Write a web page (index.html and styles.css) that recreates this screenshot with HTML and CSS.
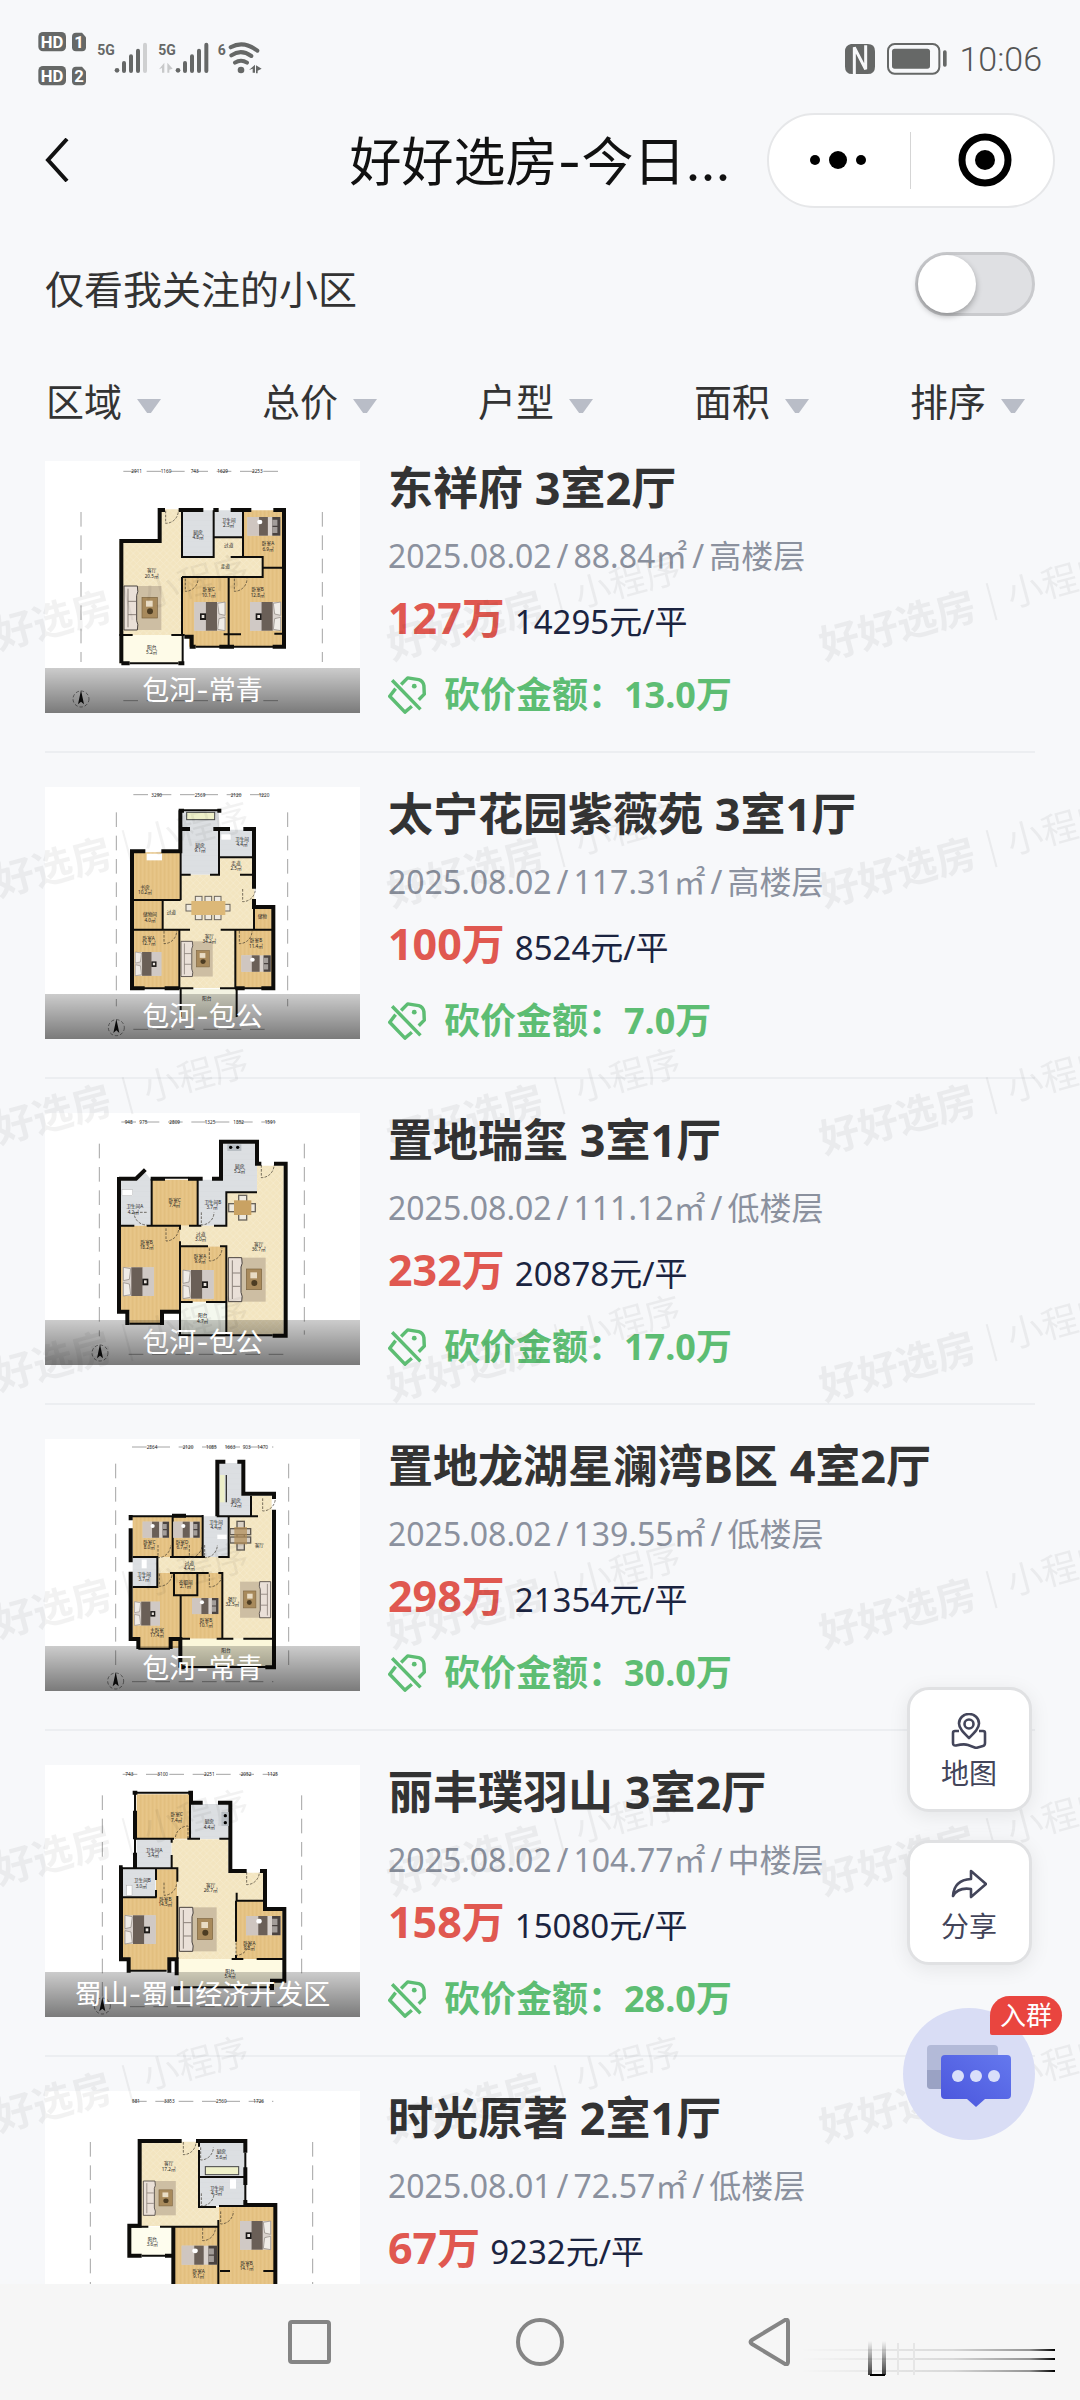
FILE: index.html
```html
<!DOCTYPE html>
<html lang="zh-CN">
<head>
<meta charset="utf-8">
<meta name="viewport" content="width=device-width, initial-scale=1">
<title>好好选房-今日</title>
<link rel="stylesheet" href="styles.css">
</head>
<body>
<svg class="defs" aria-hidden="true">
  <defs>
    <pattern id="wood" width="24" height="60" patternUnits="userSpaceOnUse">
      <rect width="24" height="60" fill="#e5c384"/>
      <path d="M2 0v60M14 0v60" stroke="#e0bc7a" stroke-width="2"/>
      <path d="M8 0v60M20 0v60" stroke="#e9c98d" stroke-width="2"/>
    </pattern>
    <pattern id="tile" width="20" height="20" patternUnits="userSpaceOnUse">
      <rect width="20" height="20" fill="#f3e5c0"/>
      <path d="M0 0L20 20M20 0L0 20" stroke="#f7ecd0" stroke-width="2"/>
    </pattern>
    <pattern id="grey" width="16" height="16" patternUnits="userSpaceOnUse">
      <rect width="16" height="16" fill="#dcdfe2"/>
      <path d="M0 0h16" stroke="#d2d6da" stroke-width="1"/>
    </pattern>
    <g id="bed">
      <rect width="94" height="86" fill="#d9d2cd"/>
      <rect x="34" width="34" height="86" fill="#6a5f57"/>
      <rect y="0" width="34" height="86" fill="#d0c9c5"/>
      <path d="M70 4l22-4v40l-18-4zM70 82l22 4V46l-18 4z" fill="#f0ece7" stroke="#8a827b" stroke-width="2"/>
      <rect x="17" y="34" width="18" height="20" fill="#1c1917"/>
      <rect x="22" y="39" width="8" height="9" fill="#e8e2dc"/>
    </g>
    <g id="bedtop">
      <rect width="90" height="56" fill="#d9d2cd"/>
      <rect x="0" width="32" height="56" fill="#cfc6c0"/>
      <rect x="32" width="24" height="56" fill="#6a5f57"/>
      <rect x="68" width="22" height="56" fill="#4a4340"/>
      <path d="M68 8h14v18H68zM68 30h14v18H68z" fill="#a39d99"/>
      <circle cx="34" cy="15" r="7" fill="#fff"/>
    </g>
    <g id="sofa">
      <rect width="112" height="132" fill="#cdbea3"/>
      <path d="M0 0h40q4 20-2 28v76q6 10 2 28H0z" fill="#eae0d8" stroke="#4b4440" stroke-width="3"/>
      <path d="M12 8v116M12 46h24M12 86h24" stroke="#8b817a" stroke-width="3" fill="none"/>
      <rect x="54" y="34" width="46" height="62" fill="#a88a5c" stroke="#7b6340" stroke-width="2"/>
      <rect x="66" y="44" width="20" height="18" fill="#e9dcc4"/>
      <circle cx="78" cy="76" r="9" fill="#4c3c22"/>
    </g>
    <g id="compass">
      <circle r="24" fill="none" stroke="#555" stroke-width="2" stroke-dasharray="10 6"/>
      <path d="M0-26L9 16 0 8-9 16z" fill="#111"/>
    </g>
    <g id="door">
      <path d="M0 0v38A38 38 0 0 0 38 0" fill="none" stroke="#3a3328" stroke-width="2" stroke-dasharray="8 4"/>
    </g>
    <g id="slash-tag">
      <path d="M38 24L57 5l32 5q13 4 15 18l1 24-16 16M22 36L5 58l44 46 20-17M12 12l82 84" fill="none" stroke="currentColor" stroke-width="10" stroke-linejoin="round"/>
      <circle cx="76" cy="29" r="7" fill="currentColor"/>
    </g>
    <pattern id="mark" width="432" height="247" patternUnits="userSpaceOnUse" patternTransform="translate(382 72)">
      <g transform="translate(10 134) rotate(-15)" fill="#000" fill-opacity=".05">
        <text class="mark-name" x="0" y="0">好好选房</text>
        <rect x="176" y="-32" width="2" height="38"/>
        <text class="mark-kind" x="194" y="-2">小程序</text>
      </g>
    </pattern>
  </defs>
</svg>

<div class="app">
  <div class="status">
    <svg class="status-left" viewBox="0 0 750 240" aria-hidden="true">
      <g fill="#666867">
        <rect x="25" y="36" width="83" height="58" rx="14"/><path d="M126 50q0-12 12-12h18l12 14v30q0 12-12 12h-18q-12 0-12-12z"/>
        <rect x="25" y="138" width="83" height="58" rx="14"/><path d="M126 152q0-12 12-12h18l12 14v30q0 12-12 12h-18q-12 0-12-12z"/>
        <circle cx="261" cy="151" r="7"/><circle cx="444" cy="151" r="7"/><circle cx="633" cy="150" r="10"/>
        <path d="M657 150l18-16v24h-7v-12zM695 146l-17-10v24h5v-8z"/>
      </g>
      <g fill="#fff" class="badge-text"><text x="32" y="83">HD</text><text x="133" y="83">1</text><text x="32" y="185">HD</text><text x="133" y="185">2</text></g>
      <g fill="#666867" class="net-text"><text x="202" y="106">5G</text><text x="385" y="106">5G</text><text x="563" y="104">6</text></g>
      <g stroke="#666867" stroke-width="12" stroke-linecap="round" fill="none">
        <path d="M282 129v24M303 109v44M324 92v61"/>
        <path d="M465 129v24M486 109v44M507 92v61M529 74v79"/>
        <path d="M345 74v79" stroke="#cfd0d1"/>
        <path d="M615 128q18-12 36 0M604 106q29-20 60 2M602 82q38-22 80 10"/>
      </g>
      <path d="M387 148l16-20v30h-7v-14zM428 146l-16-18v30h6v-9z" fill="#c8c9ca"/>
    </svg>
    <div class="status-right">
      <svg class="nfc" viewBox="0 0 90 90" aria-hidden="true">
        <path d="M18 0h50q22 0 22 22v46q0 22-22 22H22Q0 90 0 68V22Q0 4 18 0z" fill="#666867"/>
        <path d="M28 90V10l34 66V4" fill="none" stroke="#f7f8fa" stroke-width="9"/>
      </svg>
      <svg class="battery" viewBox="0 0 180 96" aria-hidden="true">
        <rect x="3" y="3" width="154" height="89" rx="20" fill="none" stroke="#666867" stroke-width="6"/>
        <rect x="15" y="17" width="114" height="60" rx="8" fill="#666867"/>
        <rect x="168" y="22" width="11" height="49" rx="5" fill="#666867"/>
      </svg>
      <span class="clock">10:06</span>
    </div>
  </div>

  <header class="topbar">
    <button class="back" aria-label="返回">
      <svg viewBox="0 0 24 44" aria-hidden="true"><path d="M22 1L3 22l19 21" fill="none" stroke="#111" stroke-width="4"/></svg>
    </button>
    <h1 class="page-title">好好选房-今日...</h1>
    <div class="capsule">
      <button class="capsule-btn" aria-label="更多">
        <svg class="dots" viewBox="0 0 58 20" aria-hidden="true"><circle cx="6" cy="10" r="5"/><circle cx="29" cy="10" r="9"/><circle cx="52" cy="10" r="5"/></svg>
      </button>
      <button class="capsule-btn" aria-label="关闭">
        <svg class="target" viewBox="0 0 54 54" aria-hidden="true"><circle cx="27" cy="27" r="23" fill="none" stroke="#000" stroke-width="7"/><circle cx="27" cy="27" r="10"/></svg>
      </button>
    </div>
  </header>

  <div class="follow">
    <label for="follow">仅看我关注的小区</label>
    <input id="follow" class="switch" type="checkbox" role="switch">
  </div>

  <nav class="filters">
    <button class="filter">区域</button>
    <button class="filter">总价</button>
    <button class="filter">户型</button>
    <button class="filter">面积</button>
    <button class="filter">排序</button>
  </nav>

  <main class="list">
    <article class="item">
      <div class="thumb">
        <svg viewBox="135 63 945 756" aria-hidden="true">
          <path class="dim" d="M370 94H846M243 216V666M967 216V666M370 782H846"/>
          <g class="nums"><text x="410" y="100">2911</text><text x="498" y="100">1160</text><text x="584" y="100">743</text><text x="668" y="100">1629</text><text x="772" y="100">2253</text></g>
          <path fill="url(#tile)" d="M358 303H478V208H546V351H788V411H546V585H358z"/>
          <path fill="url(#tile)" d="M641 292h88v62h-88z"/>
          <path fill="url(#grey)" d="M546 211h95v140h-95zM641 211h88v81h-88z"/>
          <path fill="url(#wood)" d="M729 211H851V620H567V585H546V411H788V351H729z"/>
          <path fill="#fefbe8" d="M358 585H548V672H358z"/>
          <path class="wall" d="M364 670V303H479V210M473 210h22M536 210H610M640 210h16M692 210h62M820 210H852V620H818M364 670h25M535 670h18M553 590h22v30h12M658 620h44"/>
          <path class="thin" d="M546 211V351H641V211M641 292h88M729 211V351M692 351H788V411H546M546 411V585M686 411V620M788 383h66M358 585h40M514 585h40M548 585v85M671 583h52M823 581h30M389 670h146M587 620h240"/>
          <use href="#bed" x="583" y="486"/><use href="#bed" x="750" y="486"/>
          <use href="#bedtop" transform="translate(742 231) scale(1.1 1)"/>
          <use href="#sofa" x="372" y="438"/>
          <use href="#door" x="497" y="212"/><use href="#door" x="556" y="416"/><use href="#door" x="703" y="416"/>
          <g class="room"><text x="455" y="397">客厅</text><text x="455" y="413">20.5㎡</text><text x="594" y="281">厨房</text><text x="594" y="297">4.8㎡</text><text x="686" y="246">卫生间</text><text x="686" y="262">2.5㎡</text><text x="686" y="320">过道</text><text x="804" y="316">卧室A</text><text x="804" y="332">6.9㎡</text><text x="676" y="385">走道</text><text x="626" y="454">卧室C</text><text x="626" y="470">10.1㎡</text><text x="773" y="454">卧室B</text><text x="773" y="470">12.8㎡</text><text x="455" y="626">阳台</text><text x="455" y="642">5.2㎡</text></g>
          <use href="#compass" x="243" y="777"/>
        </svg>
        <span class="area-tag">包河-常青</span>
      </div>
      <div class="info">
        <h2>东祥府 3室2厅</h2>
        <p class="meta"><span>2025.08.02</span><span>/</span><span>88.84㎡</span><span>/</span><span>高楼层</span></p>
        <p class="price"><strong>127万</strong><span>14295元/平</span></p>
        <p class="cut"><svg viewBox="0 0 110 109" aria-hidden="true"><use href="#slash-tag"/></svg>砍价金额：13.0万</p>
      </div>
    </article>

    <article class="item">
      <div class="thumb">
        <svg viewBox="135 52 945 756" aria-hidden="true">
          <path class="dim" d="M400 75H815M349 128V710M863 128V710M400 779H815"/>
          <g class="nums"><text x="470" y="81">3290</text><text x="600" y="81">2569</text><text x="708" y="81">2120</text><text x="792" y="81">1220</text></g>
          <path fill="url(#wood)" d="M400 248H542V391H488V480H538V657H400zM762 415h55V657H706V480H762z"/>
          <path fill="url(#grey)" d="M545 125H657V315H545zM658 180h103v82H658z"/>
          <path fill="url(#tile)" d="M488 391H540V315H658V262H763V480H706V655H538V480H488z"/>
          <path fill="#f3f3e2" d="M542 657H710V745H542z"/>
          <path class="wall" d="M436 245H396V656h38M494 656h44M434 245h2M484 245H541V122M536 123h16M652 123h12M536 178h34M640 178H690M730 178H762V357M762 388v24H820V656H784M706 656h28"/>
          <path class="thin" d="M542 122H658M542 245V391M400 391H542M488 391V480M400 480H570M538 480V657M545 315H572M630 315H657V178M658 263h100M720 315h42M662 480H820M706 480V657M762 412v68M400 656H580M660 656H820M542 657v85M710 657v85"/>
          <rect x="560" y="128" width="84" height="22" fill="#eef0c9" stroke="#444" stroke-width="3"/>
          <g fill="#eee9df" stroke="#6b655c" stroke-width="3"><rect x="586" y="380" width="20" height="70"/><rect x="615" y="380" width="20" height="70"/><rect x="643" y="380" width="20" height="70"/><rect x="558" y="404" width="132" height="20"/></g>
          <rect x="574" y="394" width="102" height="42" fill="#dcb878"/>
          <use href="#bed" transform="translate(484 547) scale(-.85 .83)"/>
          <use href="#bedtop" transform="translate(724 557) scale(.98 .88)"/>
          <use href="#sofa" transform="translate(543 515) scale(.85 .8)"/>
          <rect x="440" y="252" width="46" height="20" fill="#fff"/><rect x="664" y="194" width="28" height="16" fill="#fff"/>
          <use href="#door" x="492" y="484"/><use href="#door" x="718" y="484"/><use href="#door" x="728" y="358"/>
          <g class="room"><text x="435" y="358">书房</text><text x="435" y="374">10.2㎡</text><text x="600" y="232">厨房</text><text x="600" y="248">9.1㎡</text><text x="726" y="214">卫生间</text><text x="726" y="230">4.4㎡</text><text x="450" y="440">储物间</text><text x="450" y="456">4.0㎡</text><text x="514" y="432">过道</text><text x="708" y="286">走道</text><text x="708" y="302">2.5㎡</text><text x="446" y="510">卧室A</text><text x="446" y="526">12.7㎡</text><text x="628" y="504">客厅</text><text x="628" y="520">34.2㎡</text><text x="768" y="518">卧室B</text><text x="768" y="534">11.4㎡</text><text x="787" y="444">储物</text><text x="620" y="692">阳台</text></g>
          <use href="#compass" x="349" y="774"/>
        </svg>
        <span class="area-tag">包河-包公</span>
      </div>
      <div class="info">
        <h2>太宁花园紫薇苑 3室1厅</h2>
        <p class="meta"><span>2025.08.02</span><span>/</span><span>117.31㎡</span><span>/</span><span>高楼层</span></p>
        <p class="price"><strong>100万</strong><span>8524元/平</span></p>
        <p class="cut"><svg viewBox="0 0 110 109" aria-hidden="true"><use href="#slash-tag"/></svg>砍价金额：7.0万</p>
      </div>
    </article>

    <article class="item">
      <div class="thumb">
        <svg viewBox="135 70 945 756" aria-hidden="true">
          <path class="dim" d="M364 97H854M298 162V740M913 162V735M386 794H852"/>
          <g class="nums"><text x="386" y="103">948</text><text x="430" y="103">975</text><text x="524" y="103">2809</text><text x="630" y="103">1325</text><text x="716" y="103">1852</text><text x="810" y="103">1591</text></g>
          <path fill="url(#grey)" d="M363 272H410L435 248 455 272V408H363zM593 270h85v138h-85zM668 162h103v146H668z"/>
          <path fill="url(#wood)" d="M455 270H593V408H540V470H678V636H540V663H483V700H388V663H363V408H455z"/>
          <path fill="url(#tile)" d="M678 308H771V228H851V735H678V470H540V408H678z"/>
          <path fill="#f4f8ee" d="M540 638H678V736H540z"/>
          <path class="wall" d="M357 267H408L436 240M452 267H495M564 267H608M636 267H663V156H771V222H784M822 222H857V738H818M357 262V666H382V706M486 706V666H541"/>
          <path class="thin" d="M455 267V408M363 408h40M440 408H540V420M540 455V738M593 267V408M642 408h37V308H771M567 408h37M540 470H624M660 470h19V738M540 637H578M618 637H679M495 264h70M388 702h92M535 737H818"/>
          <use href="#bed" transform="translate(462 533) scale(-1 1)"/><use href="#bed" transform="translate(641 541) scale(-1 1)"/>
          <use href="#sofa" x="685" y="504"/>
          <rect x="366" y="300" width="32" height="18" fill="#fff" stroke="#999"/><rect x="682" y="164" width="42" height="20" fill="#b8bec3"/>
          <circle cx="692" cy="173" r="5"/><circle cx="713" cy="173" r="5"/>
          <g fill="#eee9df" stroke="#6b655c" stroke-width="4"><rect x="716" y="317" width="24" height="74"/><rect x="686" y="342" width="80" height="24"/></g><rect x="702" y="332" width="52" height="44" fill="#c9a263"/>
          <use href="#door" x="784" y="226"/><use href="#door" x="498" y="416"/><use href="#door" x="628" y="476"/><use href="#door" transform="translate(440 368) rotate(90)"/><use href="#door" transform="translate(604 368)"/>
          <g class="room"><text x="404" y="356">卫生间A</text><text x="400" y="372">4.2㎡</text><text x="524" y="336">卧室C</text><text x="524" y="352">7.4㎡</text><text x="638" y="343">卫生间B</text><text x="636" y="359">3.7㎡</text><text x="719" y="235">厨房</text><text x="719" y="251">5.2㎡</text><text x="602" y="438">过道</text><text x="602" y="454">3.0㎡</text><text x="440" y="462">卧室B</text><text x="440" y="478">18.2㎡</text><text x="600" y="504">卧室A</text><text x="600" y="520">9.9㎡</text><text x="776" y="468">客厅</text><text x="776" y="484">36.7㎡</text><text x="608" y="683">阳台</text><text x="608" y="699">4.7㎡</text></g>
          <use href="#compass" x="300" y="790"/>
        </svg>
        <span class="area-tag">包河-包公</span>
      </div>
      <div class="info">
        <h2>置地瑞玺 3室1厅</h2>
        <p class="meta"><span>2025.08.02</span><span>/</span><span>111.12㎡</span><span>/</span><span>低楼层</span></p>
        <p class="price"><strong>232万</strong><span>20878元/平</span></p>
        <p class="cut"><svg viewBox="0 0 110 109" aria-hidden="true"><use href="#slash-tag"/></svg>砍价金额：17.0万</p>
      </div>
    </article>

    <article class="item">
      <div class="thumb">
        <svg viewBox="135 58 945 756" aria-hidden="true">
          <path class="dim" d="M396 82H820M347 132V770M866 132V740M396 786H820"/>
          <g class="nums"><text x="456" y="88">2864</text><text x="564" y="88">2120</text><text x="634" y="88">1085</text><text x="690" y="88">1663</text><text x="740" y="88">903</text><text x="788" y="88">1470</text></g>
          <path fill="url(#wood)" d="M398 290H608V412H398zM398 502H472V460H667V657H542V685H415V657H398z"/>
          <path fill="url(#grey)" d="M608 290h78v122h-78zM656 130H725V228H753V290H656zM398 412h74v90h-74z"/>
          <path fill="url(#tile)" d="M753 228H815V657H667V460H472V412H686V290H753z"/>
          <path fill="#fbf7da" d="M542 657H817V742H542z"/>
          <path class="wall" d="M392 302V286M392 326V428M392 456V658H415V688M512 688V658H541V744M516 288H558M652 290V126H676M712 126H730V222H822V238M822 270V743H796M540 743h14"/>
          <path class="thin" d="M392 290H610M518 290V412M608 286V412M650 290H774M753 228V290M686 290V412H655M398 412H475M510 412H615M398 502H472V412M522 460V527H592V460M510 460H626M655 460H667V657M542 527V657M542 657H570M650 657H700M730 657H817M415 687H510M550 742H800"/>
          <path d="M679 166v82" stroke="#333" stroke-width="4"/><rect x="660" y="166" width="14" height="82" fill="#eef0c9"/>
          <use href="#bedtop" transform="translate(428 306) scale(.88 .86)"/><use href="#bedtop" transform="translate(520 306) scale(.88 .86)"/><use href="#bedtop" transform="translate(576 535) scale(.88 .86)"/>
          <use href="#bed" transform="translate(480 546) scale(-.83 .83)"/>
          <use href="#sofa" transform="translate(812 486) scale(-.82 .82)"/>
          <g fill="#d8d0c4" stroke="#5f5951" stroke-width="4"><rect x="711" y="305" width="22" height="86"/><rect x="690" y="327" width="62" height="18"/><rect x="690" y="352" width="62" height="18"/></g><path d="M703 322h38v52h-38z" fill="#b08b56" opacity=".7"/>
          <rect x="652" y="345" width="28" height="13" fill="#fff"/><rect x="425" y="420" width="15" height="26" fill="#fff"/>
          <use href="#door" x="788" y="236"/><use href="#door" x="478" y="462"/><use href="#door" x="628" y="464"/><use href="#door" x="474" y="376"/><use href="#door" x="568" y="376"/><use href="#door" x="614" y="376"/>
          <g class="room"><text x="448" y="374">卧室C</text><text x="448" y="389">8.0㎡</text><text x="546" y="374">卧室D</text><text x="546" y="389">6.7㎡</text><text x="648" y="312">卫生间</text><text x="648" y="328">4.4㎡</text><text x="708" y="248">厨房</text><text x="708" y="262">7.2㎡</text><text x="778" y="383">客厅</text><text x="568" y="436">过道</text><text x="568" y="450">4.4㎡</text><text x="432" y="468">卫生间</text><text x="432" y="483">3.7㎡</text><text x="557" y="492">衣帽间</text><text x="557" y="506">2.1㎡</text><text x="471" y="638">主卧室</text><text x="471" y="653">17.4㎡</text><text x="618" y="608">卧室B</text><text x="618" y="623">10.1㎡</text><text x="697" y="545">餐厅</text><text x="697" y="560">32.5㎡</text><text x="678" y="698">阳台</text></g>
          <use href="#compass" x="347" y="784"/>
        </svg>
        <span class="area-tag">包河-常青</span>
      </div>
      <div class="info">
        <h2>置地龙湖星澜湾B区 4室2厅</h2>
        <p class="meta"><span>2025.08.02</span><span>/</span><span>139.55㎡</span><span>/</span><span>低楼层</span></p>
        <p class="price"><strong>298万</strong><span>21354元/平</span></p>
        <p class="cut"><svg viewBox="0 0 110 109" aria-hidden="true"><use href="#slash-tag"/></svg>砍价金额：30.0万</p>
      </div>
    </article>

    <article class="item">
      <div class="thumb">
        <svg viewBox="135 75 945 756" aria-hidden="true">
          <path class="dim" d="M368 103H848M307 166V770M905 166V720M390 800H848"/>
          <g class="nums"><text x="388" y="109">743</text><text x="488" y="109">3100</text><text x="628" y="109">2251</text><text x="738" y="109">2052</text><text x="818" y="109">1125</text></g>
          <path fill="url(#wood)" d="M410 163H570V296H410zM368 472H468V388H532V660H505V690H390V660H368zM708 482H795V512H848V657H708z"/>
          <path fill="url(#grey)" d="M572 192h113v105H572zM410 298h105v86H410zM368 388h98v84h-98z"/>
          <path fill="url(#tile)" d="M515 298H685V398H790V482H708V657H532V385H515z"/>
          <path fill="#fefae2" d="M535 657H847V742H535z"/>
          <path class="wall" d="M398 158H412M565 158H573V188H608M654 188H691V393H740M780 393H795V507H853V722H816V750M405 212V298M405 338V385M368 382H363V658H386V698M508 698V658H530V706M522 745h18"/>
          <path class="thin" d="M405 158H572M570 160V296M405 160V385M405 296H522M562 296H600M658 296H690M515 298V308M515 345V385M363 385H532V425M468 388V420M468 450V472M363 472H470M532 468V657M710 458V482H795M708 482V605M708 645V657H730M770 657H853M695 657h15M390 692h110M535 742H815"/>
          <use href="#bed" transform="translate(467 526) scale(-1 1)"/><use href="#bedtop" transform="translate(738 528) scale(1.15 1.03)"/>
          <use href="#sofa" x="538" y="502"/>
          <rect x="380" y="436" width="16" height="30" fill="#fff" stroke="#999"/><rect x="664" y="216" width="22" height="42" fill="#b8bec3"/>
          <circle cx="676" cy="227" r="5"/><circle cx="676" cy="248" r="5"/>
          <use href="#door" x="740" y="396"/><use href="#door" x="492" y="428"/><use href="#door" transform="translate(564 296) rotate(180)"/><use href="#door" x="708" y="608"/>
          <g class="room"><text x="530" y="229">卧室C</text><text x="530" y="245">7.4㎡</text><text x="628" y="250">厨房</text><text x="628" y="266">4.4㎡</text><text x="462" y="336">卫生间A</text><text x="460" y="352">3.4㎡</text><text x="427" y="427">卫生间B</text><text x="424" y="443">3.0㎡</text><text x="632" y="440">客厅</text><text x="632" y="456">26.7㎡</text><text x="496" y="482">卧室B</text><text x="496" y="498">14.5㎡</text><text x="748" y="615">卧室A</text><text x="748" y="631">9.8㎡</text><text x="690" y="699">阳台</text><text x="690" y="715">5.4㎡</text></g>
          <use href="#compass" x="307" y="798"/>
        </svg>
        <span class="area-tag">蜀山-蜀山经济开发区</span>
      </div>
      <div class="info">
        <h2>丽丰璞羽山 3室2厅</h2>
        <p class="meta"><span>2025.08.02</span><span>/</span><span>104.77㎡</span><span>/</span><span>中楼层</span></p>
        <p class="price"><strong>158万</strong><span>15080元/平</span></p>
        <p class="cut"><svg viewBox="0 0 110 109" aria-hidden="true"><use href="#slash-tag"/></svg>砍价金额：28.0万</p>
      </div>
    </article>

    <article class="item">
      <div class="thumb">
        <svg viewBox="135 63 945 756" aria-hidden="true">
          <path class="dim" d="M396 94H820M271 216V700M938 216V700"/>
          <g class="nums"><text x="408" y="100">581</text><text x="508" y="100">3353</text><text x="664" y="100">2560</text><text x="776" y="100">1726</text></g>
          <path fill="url(#tile)" d="M422 215H597V411H657V468H422z"/>
          <path fill="url(#grey)" d="M600 215H735V320H600zM600 324H735V408H600z"/>
          <path fill="#fefdee" d="M390 470H519V558H390z"/>
          <path fill="url(#wood)" d="M657 411H826V700H525V470H657z"/>
          <path class="wall" d="M545 213H419V467H388V557H425M588 213H736V248M736 292V345M736 390V405H826V720M495 557h25M520 470V720"/>
          <path class="thin" d="M597 240V270M597 213V230M597 268V411H645V408M657 408H826M597 321H736M736 248V400M445 470H388M480 470H655M655 450V720M660 603H690M790 603H826M425 557h70"/>
          <use href="#bed" x="720" y="453"/><use href="#bedtop" transform="translate(545 527) scale(1.18 1.02)"/>
          <use href="#sofa" transform="translate(430 333) scale(.87 .78)"/>
          <rect x="616" y="290" width="100" height="24" fill="#eef0c9" stroke="#444" stroke-width="3"/><rect x="690" y="328" width="18" height="28" fill="#fff"/>
          <use href="#door" x="550" y="216"/><use href="#door" x="602" y="232"/><use href="#door" x="662" y="424"/><use href="#door" x="608" y="474"/><use href="#door" x="604" y="370"/>
          <g class="room"><text x="506" y="286">客厅</text><text x="506" y="302">17.2㎡</text><text x="664" y="250">厨房</text><text x="664" y="266">5.6㎡</text><text x="650" y="360">卫生间</text><text x="650" y="376">4.3㎡</text><text x="457" y="512">阳台</text><text x="457" y="528">3.6㎡</text><text x="740" y="584">卧室B</text><text x="740" y="600">14.1㎡</text><text x="596" y="610">卧室A</text><text x="596" y="625">9.1㎡</text></g>
        </svg>
      </div>
      <div class="info">
        <h2>时光原著 2室1厅</h2>
        <p class="meta"><span>2025.08.01</span><span>/</span><span>72.57㎡</span><span>/</span><span>低楼层</span></p>
        <p class="price"><strong>67万</strong><span>9232元/平</span></p>
      </div>
    </article>
    <svg class="watermark" aria-hidden="true"><rect width="100%" height="100%" fill="url(#mark)"/></svg>
  </main>

  <aside class="floaters">
    <button class="float-btn">
      <svg viewBox="0 0 36 36" aria-hidden="true"><g fill="none" stroke="#43455a" stroke-width="2.6" stroke-linejoin="round"><path d="M18 25C12 19 8 15 8 10.500a10 9.500 0 0 1 20 0C28 15 24 19 18 25z"/><circle cx="18" cy="11" r="4.500"/><path d="M8 18H4q-2 0-2 2v10q0 3 3 2.500 8-2 12-.5l8 3 7-2q2-.5 2-3V20q0-2-2-2h-4"/></g></svg>
      地图
    </button>
    <button class="float-btn">
      <svg viewBox="0 0 36 36" aria-hidden="true"><path d="M20 5L35 18 20 31V23Q7 21 2 30 3 14 20 13z" fill="none" stroke="#43455a" stroke-width="2.6" stroke-linejoin="round"/></svg>
      分享
    </button>
    <button class="chat" aria-label="入群">
      <svg viewBox="0 0 132 132" aria-hidden="true">
        <defs><linearGradient id="bubble" x1="0" y1="1" x2="1" y2="0"><stop offset="0" stop-color="#4a55dc"/><stop offset="1" stop-color="#6478ee"/></linearGradient></defs>
        <rect x="24" y="37" width="71" height="44" rx="4" fill="#b3bad8"/>
        <path d="M24 62h15v19H28q-4 0-4-4z" fill="#9aa2c4"/>
        <path d="M42 47h62q4 0 4 4v36q0 4-4 4H82l-9 8-9-8H42q-4 0-4-4V51q0-4 4-4z" fill="url(#bubble)"/>
        <g fill="#d9dffa"><circle cx="55" cy="68" r="6"/><circle cx="73" cy="68" r="6"/><circle cx="91" cy="68" r="6"/></g>
      </svg>
      <span class="join">入群</span>
    </button>
  </aside>

  <nav class="sysnav">
    <button aria-label="最近任务"><svg viewBox="0 0 48 48" aria-hidden="true"><rect x="4" y="4" width="39" height="40" rx="2"/></svg></button>
    <button aria-label="主屏幕"><svg viewBox="0 0 48 48" aria-hidden="true"><circle cx="24" cy="24" r="22"/></svg></button>
    <button aria-label="返回上一页"><svg viewBox="0 0 48 48" aria-hidden="true"><path d="M6 22L39 2q3-1 3 2v40q0 3-3 2L6 26q-3-2 0-4z"/></svg></button>
    <svg class="flare" viewBox="0 0 264 44" aria-hidden="true">
      <defs>
        <linearGradient id="streak"><stop offset="0" stop-color="#000" stop-opacity="0"/><stop offset=".6" stop-color="#000" stop-opacity=".12"/><stop offset=".9" stop-color="#000" stop-opacity=".4"/><stop offset="1" stop-color="#000"/></linearGradient>
        <linearGradient id="drop" x1="0" y1="0" x2="0" y2="1"><stop offset="0" stop-color="#000" stop-opacity="0"/><stop offset="1" stop-color="#000" stop-opacity=".75"/></linearGradient>
      </defs>
      <g fill="url(#streak)"><rect y="12" width="255" height="2"/><rect y="21" width="255" height="2"/><rect y="33" width="255" height="2"/></g>
      <g fill="url(#drop)"><rect x="68" y="4" width="4" height="34"/><rect x="82" y="4" width="4" height="34"/></g>
      <path d="M70 38h15" stroke="#000" stroke-width="2"/>
      <path d="M98 6v32M114 6v32" stroke="#e6e6e6" stroke-width="2"/>
    </svg>
  </nav>
</div>
</body>
</html>
```

FILE: styles.css
```css
* { box-sizing: border-box; margin: 0; padding: 0; }

body {
  background: #f7f8fa;
  color: #333;
  font-family: "Noto Sans", "Noto Sans CJK SC", sans-serif;
}

button { border: 0; background: none; font: inherit; color: inherit; cursor: pointer; }
svg { display: block; flex: none; }
.defs { position: absolute; width: 0; height: 0; }

.app { position: relative; display: flex; flex-direction: column; height: 100vh; overflow: hidden; }

/* status bar */
.status { flex: none; display: flex; justify-content: space-between; align-items: flex-start; height: 100px; padding: 20px 38px 0 30px; }
.status-left { width: 250px; height: 80px; }
.badge-text { font: 700 50px Roboto, sans-serif; }
.net-text { font: 700 42px Roboto, sans-serif; }
.status-right { display: flex; align-items: center; gap: 12px; height: 78px; }
.nfc { width: 30px; height: 30px; }
.battery { width: 60px; height: 32px; }
.clock { font: 300 34px/40px Roboto, sans-serif; color: #555; }

/* title bar */
.topbar { flex: none; display: grid; grid-template-columns: 1fr auto 1fr; align-items: center; height: 120px; padding: 0 25px 0 45px; }
.back { justify-self: start; width: 24px; height: 44px; }
.page-title { font: 400 52px/60px Inter, "Noto Sans CJK SC", sans-serif; color: #111; margin-left: -20px; padding-top: 5px; white-space: nowrap; }
.capsule { justify-self: end; display: flex; width: 288px; height: 95px; background: #fff; border: 2px solid #e6e7e9; border-radius: 48px; }
.capsule-btn { flex: 1; display: flex; align-items: center; justify-content: center; padding-right: 4px; }
.capsule-btn + .capsule-btn { position: relative; padding: 0 0 0 6px; }
.capsule-btn + .capsule-btn::before { content: ""; position: absolute; left: 0; top: 17px; bottom: 17px; width: 1px; background: #d5d5d5; }
.dots { width: 58px; height: 20px; }
.target { width: 54px; height: 54px; }

/* follow switch */
.follow { flex: none; display: flex; justify-content: space-between; align-items: center; height: 128px; padding: 0 45px; }
.follow label { font-size: 39px; line-height: 48px; padding-top: 10px; }
.switch { appearance: none; width: 120px; height: 64px; border: 3px solid #c9cacd; border-radius: 32px; background: #dfe0e3; cursor: pointer; }
.switch::before { content: ""; display: block; width: 58px; height: 58px; border-radius: 50%; background: #fff; box-shadow: 0 3px 6px rgba(0, 0, 0, .3); }
.switch:checked { background: #5dbf73; }
.switch:checked::before { margin-left: auto; }

/* filters */
.filters { flex: none; display: grid; grid-template-columns: repeat(5, 1fr); height: 106px; }
.filter { display: flex; align-items: center; gap: 15px; padding-left: 46px; font-size: 38px; line-height: 48px; }
.filter::after { content: ""; width: 24px; height: 14px; margin-top: 10px; background: #b9bdc7; clip-path: polygon(0 0, 100% 0, 58% 100%, 42% 100%); }

/* listings */
.list { position: relative; flex: 1; min-height: 0; overflow: hidden; padding: 7px 45px 0; }
.watermark { position: absolute; inset: 0; width: 100%; height: 100%; pointer-events: none; }
.mark-name { font-size: 40px; font-weight: 700; }
.mark-kind { font-size: 36px; }

.item { display: flex; gap: 28px; padding-bottom: 38px; border-bottom: 2px solid #eceef1; }
.item + .item { padding-top: 34px; }
.thumb { position: relative; flex: none; width: 315px; height: 252px; background: #fff; }
.thumb svg { width: 315px; height: 252px; }
.area-tag { position: absolute; left: 0; right: 0; bottom: 0; height: 45px; font: 400 27px/45px Inter, "Noto Sans CJK SC", sans-serif; text-align: center; color: #fff; background: linear-gradient(rgba(0, 0, 0, .2), rgba(0, 0, 0, .52)); }

.wall { fill: none; stroke: #0d0c0a; stroke-width: 12; }
.thin { fill: none; stroke: #0d0c0a; stroke-width: 6; }
.dim { fill: none; stroke: #777; stroke-width: 2; stroke-dasharray: 44 26; }
.nums, .room { font-size: 14px; text-anchor: middle; fill: #222; }

.info { height: 252px; }
.info h2 { height: 54px; font-size: 45px; line-height: 54px; font-weight: 700; white-space: nowrap; }
.meta { display: flex; gap: 5px; height: 44px; margin-top: 19px; font-size: 32px; line-height: 44px; color: #8b919e; white-space: nowrap; }
.price { display: flex; align-items: baseline; gap: 10px; height: 50px; margin-top: 15px; font-size: 33px; line-height: 50px; color: #1b2440; }
.price strong { font-size: 43px; color: #e05850; }
.cut { display: flex; align-items: center; height: 36px; margin-top: 34px; font-size: 36px; line-height: 36px; font-weight: 700; color: #5dbd73; }
.cut svg { width: 38px; height: 38px; margin-right: 18px; }

/* floating actions */
.floaters { position: absolute; right: 45px; bottom: 260px; display: flex; flex-direction: column; align-items: center; width: 132px; }
.float-btn { display: flex; flex-direction: column; align-items: center; justify-content: center; gap: 6px; width: 125px; height: 125px; margin-bottom: 28px; padding-top: 4px; border: 3px solid #e0e1e3; border-radius: 22px; background: #fff; box-shadow: 0 4px 20px rgba(0, 0, 0, .08); font-size: 28px; line-height: 36px; color: #43455a; }
.float-btn svg { width: 36px; height: 36px; }
.chat { position: relative; width: 132px; height: 132px; margin-top: 15px; border-radius: 50%; background: #d9ddf5; }
.join { position: absolute; left: 87px; top: -12px; width: 72px; height: 39px; border-radius: 20px 20px 20px 2px; background: #e9453f; color: #fff; font-size: 26px; line-height: 39px; text-align: center; }

/* system navigation */
.sysnav { position: relative; flex: none; display: flex; justify-content: center; align-items: center; gap: 182px; height: 116px; background: #f6f6f6; }
.sysnav button { width: 48px; height: 48px; }
.sysnav button svg { width: 48px; height: 48px; fill: none; stroke: #858585; stroke-width: 4; }
.flare { position: absolute; right: 16px; bottom: 19px; width: 264px; height: 44px; }
```
